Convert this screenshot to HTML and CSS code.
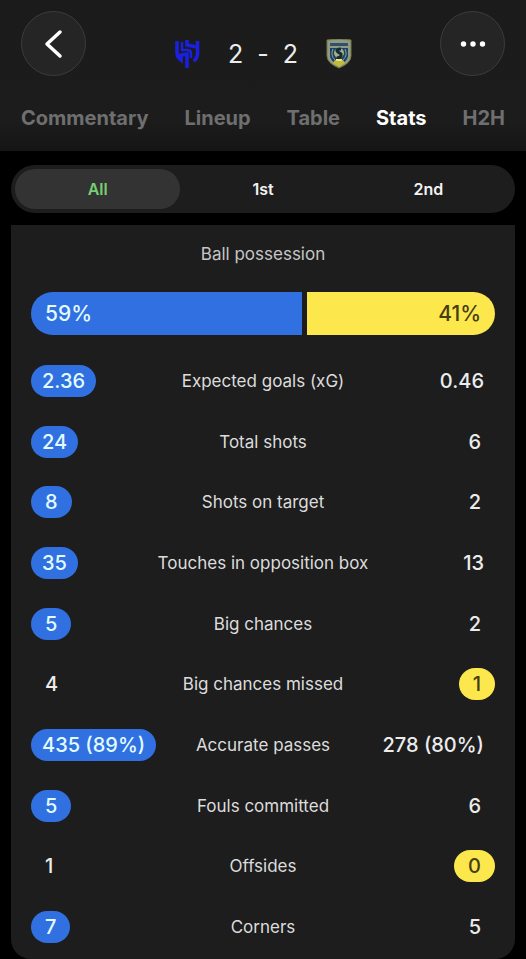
FILE: index.html
```html
<!DOCTYPE html>
<html lang="en">
<head>
<meta charset="utf-8">
<meta name="viewport" content="width=device-width, initial-scale=1">
<title>Match stats</title>
<link rel="stylesheet" href="styles.css">
</head>
<body>
<header class="header">
  <div class="topbar">
    <button class="round-btn" type="button" aria-label="Back">
      <svg width="20" height="32" viewBox="0 0 20 32" fill="none" stroke="#fff" stroke-width="3.500" stroke-linecap="round" stroke-linejoin="round"><path d="M16 4 3 16l13 12"/></svg>
    </button>
    <div class="score">
      <svg class="crest" width="26" height="30" viewBox="0 0 26 30" fill="none" stroke="#1a20dc" stroke-width="3.600"><path d="M3 2v12q0 4 4 7v-5l6-1v14"/><path d="M8 3v8h5q4 0 4 3v5" stroke-width="2.600"/><path d="M13 1v5l10 2"/><path d="M23.500 2v12q0 6-4 8"/></svg>
      <div class="result"><span>2</span><span>-</span><span>2</span></div>
      <svg class="crest" width="26" height="30" viewBox="0 0 26 30"><path d="M1 1q12-2 24 0v16q0 7-12 12Q1 24 1 17z" fill="#8f9b87" stroke="#77783a" stroke-width="1"/><path d="M4 4h18v3H4z" fill="#31506a"/><path d="M4 9h18v8q0 5-9 9-9-4-9-9z" fill="#1d4268"/><path d="M7 10q-3 6 2 11M19 10q3 6-2 11" fill="none" stroke="#8fa58f"/><circle cx="13" cy="14" r="5" fill="#a8b080"/><path d="M15 10q-6 0-3 3l3 2q1 3-4 4" fill="none" stroke="#142b38" stroke-width="3"/><path d="M9 21h8l2 3-6 4-6-4z" fill="#c3b93c"/><path d="M10 21h6" stroke="#ece779" stroke-width="2"/></svg>
    </div>
    <button class="round-btn" type="button" aria-label="More options">
      <svg width="26" height="6" viewBox="0 0 26 6" fill="#fff"><circle cx="3.500" cy="3" r="2.700"/><circle cx="13" cy="3" r="2.700"/><circle cx="22.500" cy="3" r="2.700"/></svg>
    </button>
  </div>
  <nav class="tabs">
    <a href="#commentary">Commentary</a>
    <a href="#lineup">Lineup</a>
    <a href="#table">Table</a>
    <a href="#stats" class="active" aria-current="page">Stats</a>
    <a href="#h2h">H2H</a>
  </nav>
</header>
<main class="content">
  <div class="segments">
    <button type="button" class="selected" aria-pressed="true">All</button>
    <button type="button" aria-pressed="false">1st</button>
    <button type="button" aria-pressed="false">2nd</button>
  </div>
  <section class="card">
    <h2 class="title">Ball possession</h2>
    <div class="possession" style="grid-template-columns:59fr 41fr">
      <div class="share home">59%</div>
      <div class="share away">41%</div>
    </div>
    <ul class="stats">
      <li><span class="value home">2.36</span><span class="name">Expected goals (xG)</span><span class="value">0.46</span></li>
      <li><span class="value home">24</span><span class="name">Total shots</span><span class="value digit">6</span></li>
      <li><span class="value digit home">8</span><span class="name">Shots on target</span><span class="value digit">2</span></li>
      <li><span class="value home">35</span><span class="name">Touches in opposition box</span><span class="value">13</span></li>
      <li><span class="value digit home">5</span><span class="name">Big chances</span><span class="value digit">2</span></li>
      <li><span class="value digit">4</span><span class="name">Big chances missed</span><span class="value digit away">1</span></li>
      <li><span class="value home">435 (89%)</span><span class="name">Accurate passes</span><span class="value">278 (80%)</span></li>
      <li><span class="value digit home">5</span><span class="name">Fouls committed</span><span class="value digit">6</span></li>
      <li><span class="value digit">1</span><span class="name">Offsides</span><span class="value digit away">0</span></li>
      <li><span class="value digit home">7</span><span class="name">Corners</span><span class="value digit">5</span></li>
    </ul>
  </section>
</main>
</body>
</html>
```
FILE: styles.css
```css
* { box-sizing: border-box; }

body {
  margin: 0;
  min-height: 100vh;
  display: flex;
  flex-direction: column;
  background: #000;
  color: #ececec;
  font-family: Inter, "Liberation Sans", sans-serif;
}

button { font: inherit; border: 0; padding: 0; cursor: pointer; }

.header {
  padding: 11px 21px 21px;
  background: linear-gradient(#1b1b1b 0, #1c1c1c 80%, #151515 100%);
}

.topbar {
  display: grid;
  grid-template-columns: 65px 1fr 65px;
}

.round-btn {
  display: flex;
  align-items: center;
  justify-content: center;
  height: 65px;
  border: 1px solid #3c3c3d;
  border-radius: 50%;
  background: #252526;
}

.score {
  display: flex;
  align-items: center;
  justify-content: center;
  align-self: end;
  gap: 28px;
  height: 44px;
}

.result {
  display: flex;
  gap: 14px;
  font-size: 25px;
  line-height: 44px;
}

.tabs {
  display: flex;
  justify-content: space-between;
  margin-top: 30px;
  font-size: 20px;
  font-weight: 700;
  line-height: 24px;
}

.tabs a { color: #6f6f6f; text-decoration: none; }
.tabs .active { color: #fff; }

.content {
  flex: 1;
  display: flex;
  flex-direction: column;
  gap: 12px;
  padding: 14px 11px 0;
}

.segments {
  display: grid;
  grid-template-columns: repeat(3, 1fr);
  height: 48px;
  padding: 4px;
  border-radius: 24px;
  background: #1d1d1d;
}

.segments button {
  border-radius: 20px;
  background: none;
  color: #f2f2f2;
  font-size: 16px;
  font-weight: 600;
}

.segments .selected { background: #333; color: #76cf75; }

.card {
  flex: 1;
  display: flex;
  flex-direction: column;
  padding: 17px 20px 16px;
  border-radius: 0 0 20px 20px;
  background: #1d1d1d;
}

.title {
  margin: 0;
  color: #c6c6c6;
  font-size: 17px;
  font-weight: 400;
  line-height: 24px;
  text-align: center;
}

.possession {
  display: grid;
  gap: 5px;
  height: 43px;
  margin: 26px 0 30px;
  border-radius: 22px;
  overflow: hidden;
  font-size: 21px;
  font-weight: 500;
  line-height: 43px;
}

.share { padding: 0 14px; }
.share.away { text-align: right; }

.home { background: #3070e0; color: #e2fbff; }
.away { background: #fce84d; color: #463d12; }

.stats {
  flex: 1;
  display: flex;
  flex-direction: column;
  justify-content: space-between;
  gap: 12px;
  margin: 0;
  padding: 0;
  list-style: none;
}

.stats li {
  display: grid;
  grid-template-columns: 1fr auto 1fr;
  align-items: center;
}

.value {
  justify-self: start;
  padding: 0 11px;
  border-radius: 16px;
  font-size: 20px;
  font-weight: 500;
  line-height: 32px;
}

.value.digit { padding: 0 14px; }
.value:last-child { justify-self: end; }
.name { color: #dcdcdc; font-size: 17px; }
```
